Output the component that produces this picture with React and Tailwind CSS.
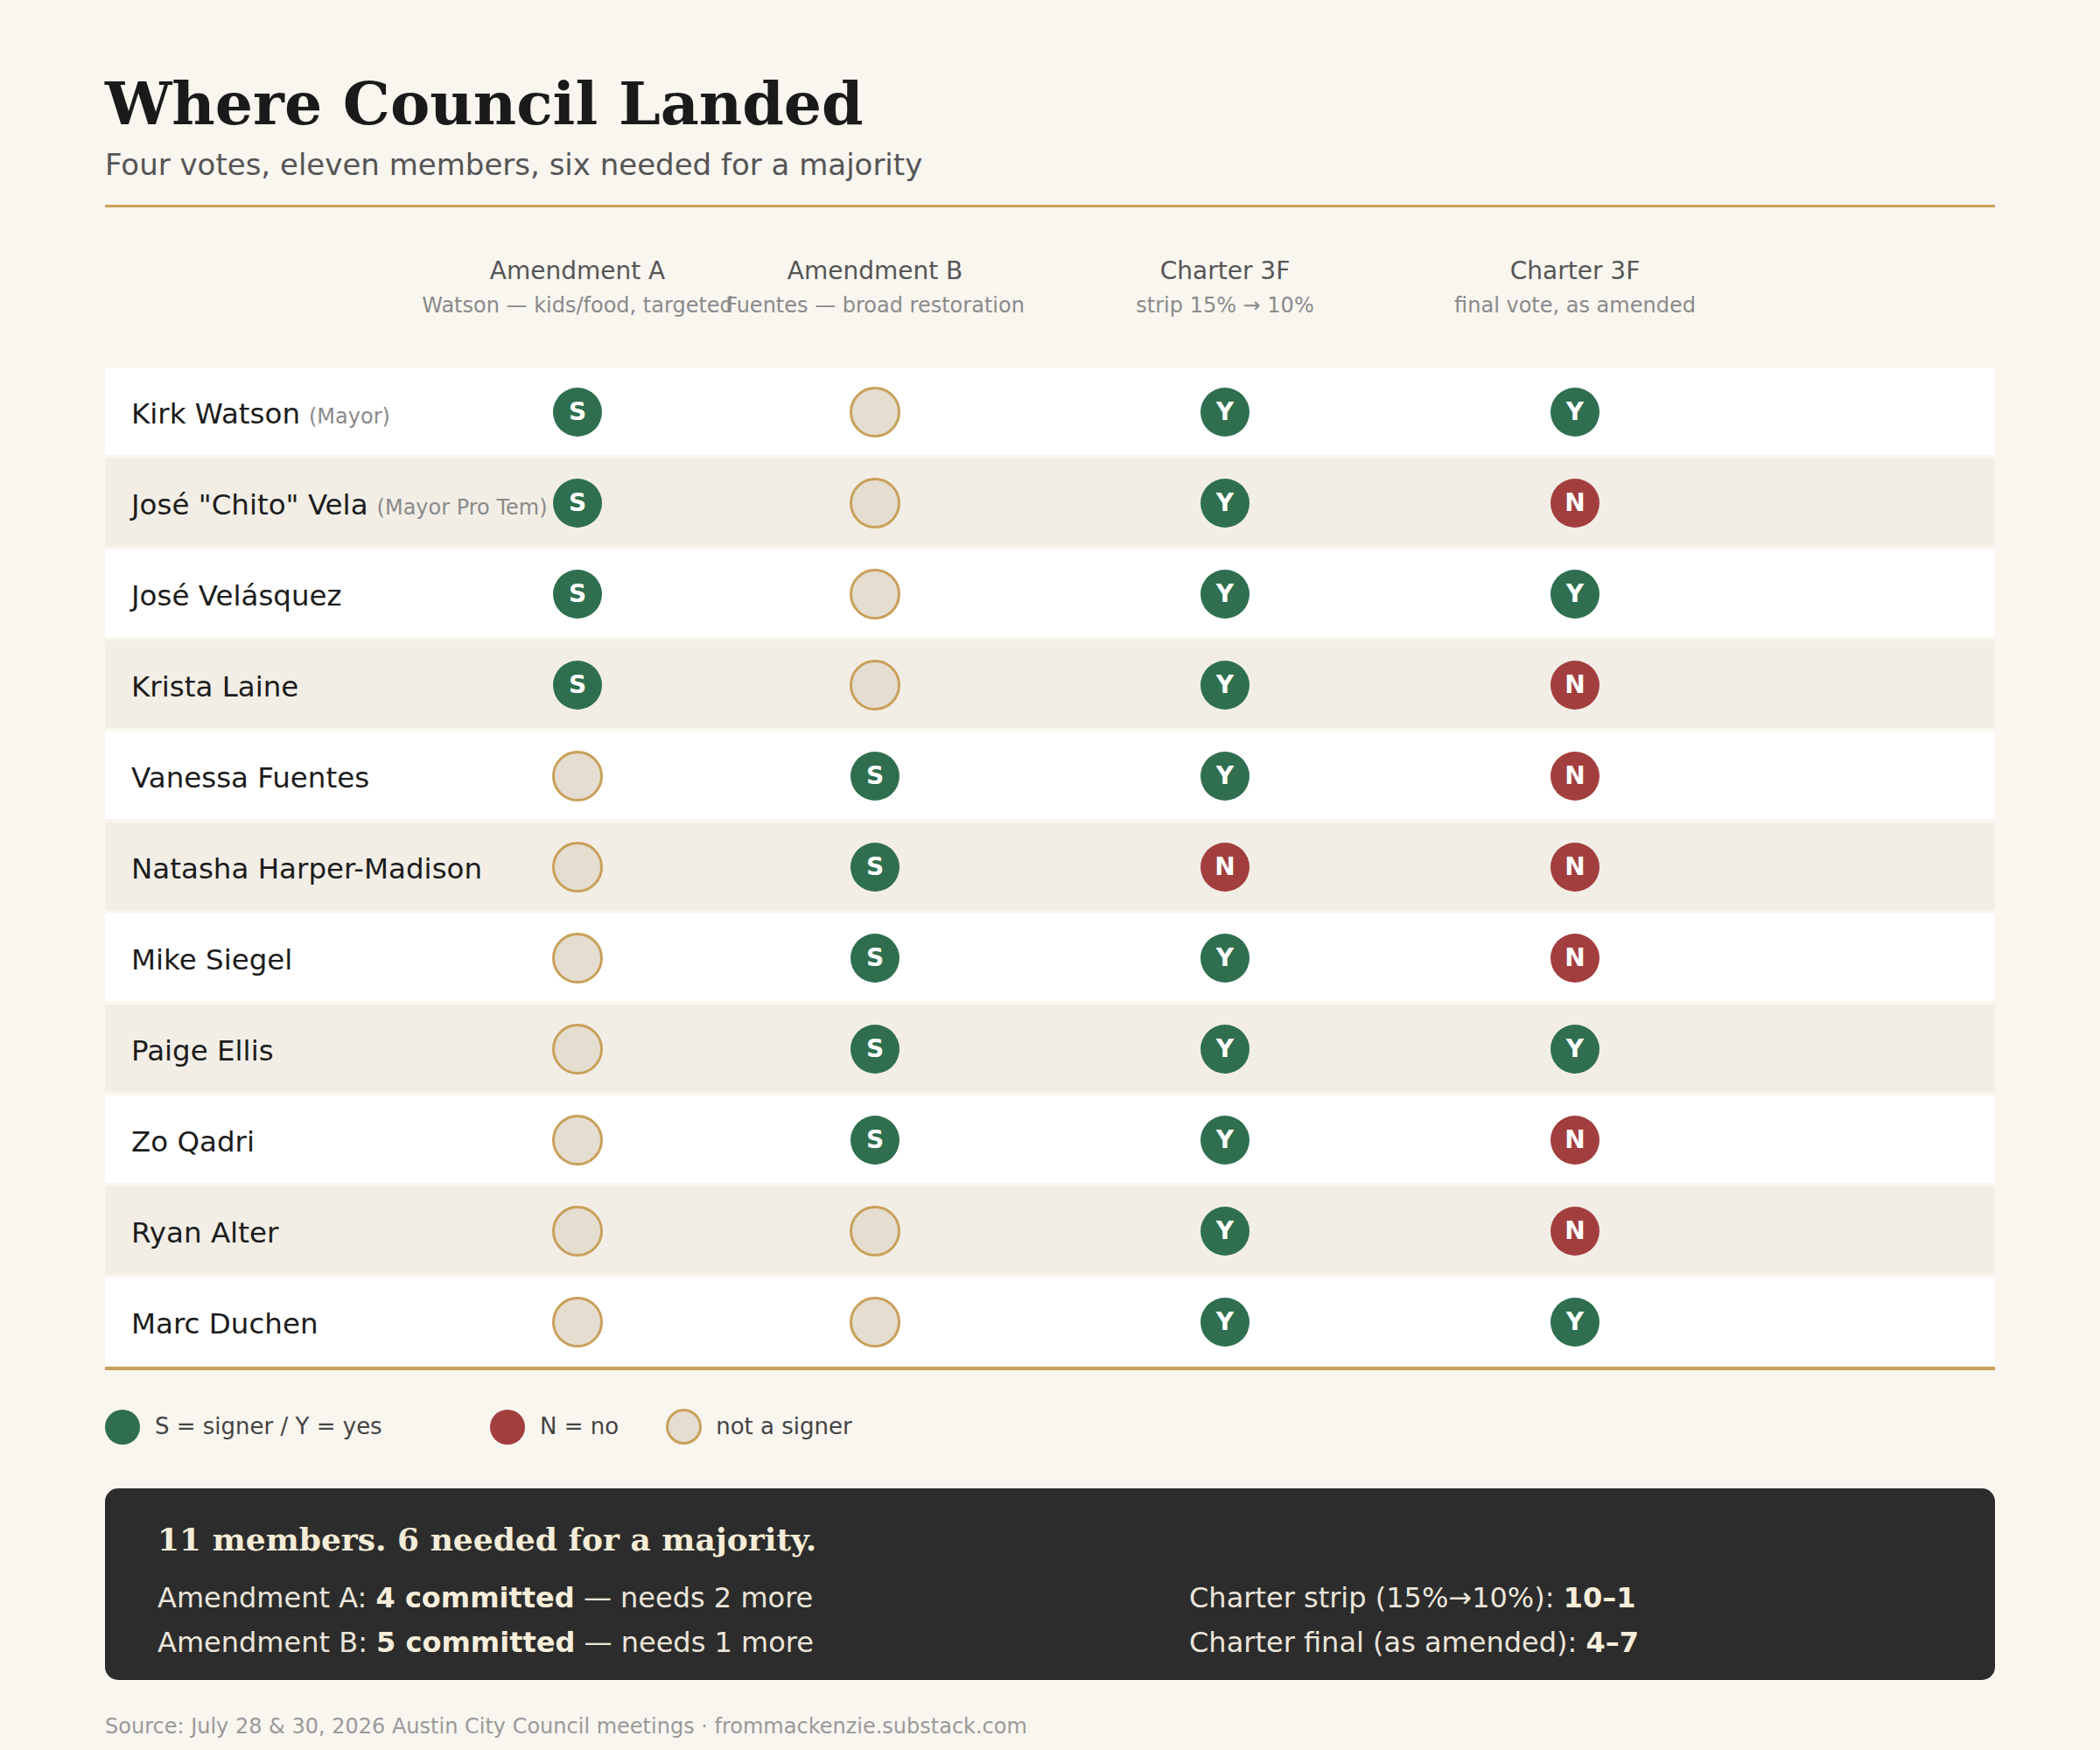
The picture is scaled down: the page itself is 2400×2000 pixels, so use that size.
import React from "react";

const members = [
  { name: "Kirk Watson", role: "(Mayor)", votes: ["S", "", "Y", "Y"] },
  { name: 'José "Chito" Vela', role: "(Mayor Pro Tem)", votes: ["S", "", "Y", "N"] },
  { name: "José Velásquez", votes: ["S", "", "Y", "Y"] },
  { name: "Krista Laine", votes: ["S", "", "Y", "N"] },
  { name: "Vanessa Fuentes", votes: ["", "S", "Y", "N"] },
  { name: "Natasha Harper-Madison", votes: ["", "S", "N", "N"] },
  { name: "Mike Siegel", votes: ["", "S", "Y", "N"] },
  { name: "Paige Ellis", votes: ["", "S", "Y", "Y"] },
  { name: "Zo Qadri", votes: ["", "S", "Y", "N"] },
  { name: "Ryan Alter", votes: ["", "", "Y", "N"] },
  { name: "Marc Duchen", votes: ["", "", "Y", "Y"] },
];

const columns = [
  { title: "Amendment A", sub: "Watson — kids/food, targeted" },
  { title: "Amendment B", sub: "Fuentes — broad restoration" },
  { title: "Charter 3F", sub: "strip 15% → 10%" },
  { title: "Charter 3F", sub: "final vote, as amended" },
];

const gridCols = "grid grid-cols-[370px_340px_340px_460px_340px_1fr]";

function Mark({ v }) {
  if (!v) {
    return <div className="w-[58px] h-[58px] rounded-full bg-[#e4ddd0] border-[3px] border-[#c9a05a]" />;
  }
  const bg = v === "N" ? "bg-[#a33e3e]" : "bg-[#2f6f50]";
  return (
    <div className={`w-[56px] h-[56px] rounded-full ${bg} flex items-center justify-center text-white font-bold text-[28px] leading-none`}>
      {v}
    </div>
  );
}

export default function App() {
  return (
    <div className="min-h-screen bg-[#f9f6f0] font-['DejaVu_Sans',sans-serif] px-[120px] pt-[84px] pb-[20px]">
      <h1 className="font-['DejaVu_Serif',serif] font-bold text-[68px] leading-[68px] text-[#1a1a1a]">
        Where Council Landed
      </h1>
      <p className="mt-[19px] text-[34px] leading-[34px] text-[#555]">
        Four votes, eleven members, six needed for a majority
      </p>
      <div className="mt-[29px] h-[3px] bg-[#c9a05a]" />

      <div className={`${gridCols} mt-[59px]`}>
        <div />
        {columns.map((c, i) => (
          <div key={i} className="flex flex-col items-center whitespace-nowrap">
            <div className="text-[28px] leading-[28px] text-[#555]">{c.title}</div>
            <div className="mt-[13px] text-[24px] leading-[24px] text-[#8a8a8a]">{c.sub}</div>
          </div>
        ))}
      </div>

      <div className="mt-[59px] flex flex-col gap-[4px]">
        {members.map((m, i) => (
          <div key={m.name} className={`${gridCols} h-[100px] items-center ${i % 2 ? "bg-[#f2eee6]" : "bg-white"}`}>
            <div className="pl-[30px] pt-[7px] whitespace-nowrap text-[32.5px] text-[#1c1c1c]">
              {m.name}
              {m.role && <span className="ml-[10px] text-[24px] text-[#8a8a8a]">{m.role}</span>}
            </div>
            {m.votes.map((v, j) => (
              <div key={j} className="relative flex justify-center pt-[2px]">
                <Mark v={v} />
              </div>
            ))}
          </div>
        ))}
      </div>
      <div className="mt-[2px] h-[4px] bg-[#c9a05a]" />

      <div className="mt-[44px] flex items-center gap-[54px] text-[26px] text-[#444]">
        <div className="w-[386px] flex items-center gap-[17px]">
          <span className="w-[40px] h-[40px] rounded-full bg-[#2f6f50]" />
          S = signer / Y = yes
        </div>
        <div className="flex items-center gap-[17px]">
          <span className="w-[40px] h-[40px] rounded-full bg-[#a33e3e]" />
          N = no
        </div>
        <div className="flex items-center gap-[16px]">
          <span className="w-[41px] h-[41px] rounded-full bg-[#e4ddd0] border-[3px] border-[#c9a05a]" />
          not a signer
        </div>
      </div>

      <div className="mt-[50px] rounded-[15px] bg-[#2c2c2c] pl-[60px] pr-[60px] pt-[40px] pb-[17px]">
        <h2 className="font-['DejaVu_Serif',serif] font-bold text-[36px] leading-[36px] text-[#f5ecd7]">
          11 members. 6 needed for a majority.
        </h2>
        <div className="mt-[24px] grid grid-cols-[1179px_1fr] text-[32px] leading-[51px] text-[#ebe5da]">
          <div>
            <div>
              Amendment A: <b className="text-[#f7eedb]">4 committed</b> — needs 2 more
            </div>
            <div>
              Amendment B: <b className="text-[#f7eedb]">5 committed</b> — needs 1 more
            </div>
          </div>
          <div>
            <div>
              Charter strip (15%→10%): <b className="text-[#f7eedb]">10–1</b>
            </div>
            <div>
              Charter final (as amended): <b className="text-[#f7eedb]">4–7</b>
            </div>
          </div>
        </div>
      </div>

      <p className="mt-[41px] text-[24px] leading-[24px] text-[#999]">
        Source: July 28 &amp; 30, 2026 Austin City Council meetings · frommackenzie.substack.com
      </p>
    </div>
  );
}
